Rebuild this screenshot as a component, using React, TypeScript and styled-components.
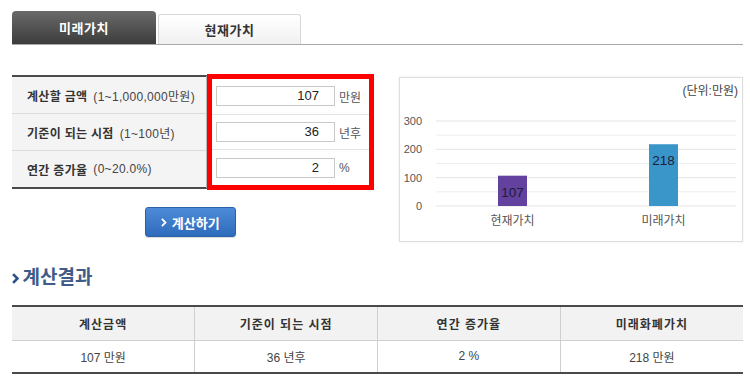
import React from "react";
import styled, { createGlobalStyle } from "styled-components";

const Global = createGlobalStyle`
  html, body { margin: 0; padding: 0; background: #fff; }
  body { font-family: "Liberation Sans", "Noto Sans CJK KR", sans-serif; color: #333; }
  * { box-sizing: border-box; }
`;

const Page = styled.div`
  width: 750px;
  padding: 11px 7px 0 12px;
`;

const TabBar = styled.div`
  display: flex;
  align-items: flex-end;
  gap: 2px;
  height: 34px;
  border-bottom: 1px solid #a8a8a8;
`;

const Tab = styled.div<{ $active?: boolean }>`
  display: flex;
  align-items: center;
  justify-content: center;
  font-size: 13px;
  font-weight: bold;
  letter-spacing: 0.5px;
  ${(p) =>
    p.$active
      ? `width: 144px; height: 33px; color: #fff; background: linear-gradient(#6a6a6a, #3c3c3c); border-radius: 4px 4px 0 0;`
      : `width: 143px; height: 30px; color: #333; background: linear-gradient(#ffffff, #f1f1f1); border: 1px solid #d8d8d8; border-bottom: none; border-radius: 3px 3px 0 0;`}
`;

const Main = styled.div`
  display: flex;
  align-items: flex-start;
  margin-top: 29px;
`;

const LeftCol = styled.div`
  display: flex;
  flex-direction: column;
  align-items: center;
  width: 362px;
`;

const Form = styled.div`
  display: flex;
  align-items: center;
  width: 100%;
`;

const LabelCol = styled.div`
  width: 195px;
  border-top: 2px solid #4a4a4a;
  border-bottom: 2px solid #4a4a4a;
  border-right: 1px solid #b8b8b8;
`;

const LabelRow = styled.div<{ $last?: boolean }>`
  height: ${(p) => (p.$last ? 36 : 37)}px;
  display: flex;
  align-items: center;
  padding-left: 15px;
  background: #f4f4f4;
  font-size: 12px;
  letter-spacing: 0.3px;
  white-space: nowrap;
  border-bottom: ${(p) => (p.$last ? "none" : "1px solid #dcdcdc")};
  b { font-weight: bold; margin-right: 6px; color: #333; }
  span { color: #444; }
`;

const RedBox = styled.div`
  width: 167px;
  height: 116px;
  border: 5px solid #ff0000;
  display: flex;
  flex-direction: column;
`;

const ValueRow = styled.div<{ $last?: boolean }>`
  flex: 1;
  display: flex;
  align-items: center;
  padding-left: 4px;
  border-bottom: ${(p) => (p.$last ? "none" : "1px solid #e4e4e4")};
`;

const Input = styled.div`
  width: 119px;
  height: 20px;
  border: 1px solid #c9c9c9;
  background: #fff;
  text-align: right;
  padding-right: 15px;
  font-size: 13px;
  line-height: 18px;
  color: #222;
`;

const Unit = styled.span`
  margin-left: 4px;
  font-size: 12px;
  color: #555;
`;

const CalcButton = styled.button`
  margin: 17px 5px 0 0;
  width: 91px;
  height: 30px;
  border: 1px solid #2c60a8;
  border-radius: 3px;
  background: linear-gradient(#4d8bd8, #2f6bbb);
  color: #fff;
  font-family: inherit;
  font-size: 13px;
  font-weight: bold;
  display: flex;
  align-items: center;
  justify-content: center;
  gap: 5px;
  padding: 0;
  box-shadow: 0 1px 1px rgba(0,0,0,0.15);
`;

const ChartBox = styled.div`
  margin-left: 25px;
  margin-top: 3px;
  width: 344px;
  height: 165px;
  border: 1px solid #dedede;
  box-shadow: 0 0 2px rgba(0,0,0,0.08);
  background: #fff;
  svg { display: block; }
`;

const Heading = styled.h2`
  margin: 24px 0 0 0;
  display: flex;
  align-items: center;
  gap: 4px;
  font-size: 19px;
  line-height: 24px;
  font-weight: bold;
  color: #3f5c88;
`;

const ResultTable = styled.table`
  margin-top: 15px;
  width: 731px;
  table-layout: fixed;
  border-collapse: collapse;
  border-top: 2px solid #4a4a4a;
  border-bottom: 2px solid #4a4a4a;
  font-size: 12px;
`;

const Th = styled.th`
  height: 34px;
  background: #f2f2f2;
  font-weight: bold;
  color: #333;
  border-bottom: 1px solid #cfcfcf;
  border-left: 1px solid #cfcfcf;
  &:first-child { border-left: none; }
  letter-spacing: 1px;
`;

const Td = styled.td`
  height: 33px;
  text-align: center;
  color: #444;
  border-left: 1px solid #cfcfcf;
  &:first-child { border-left: none; }
`;

const rows = [
  { label: "계산할 금액", range: "(1~1,000,000만원)", value: "107", unit: "만원" },
  { label: "기준이 되는 시점", range: "(1~100년)", value: "36", unit: "년후" },
  { label: "연간 증가율", range: "(0~20.0%)", value: "2", unit: "%" },
];

const Chart: React.FC = () => {
  const base = 128;
  const scale = 85 / 300;
  const grid = [0, 50, 100, 150, 200, 250, 300];
  const bars = [
    { label: "현재가치", value: 107, x: 98, color: "#62419f" },
    { label: "미래가치", value: 218, x: 249, color: "#3a95c9" },
  ];
  return (
    <svg width="342" height="163" viewBox="0 0 342 163" fontFamily='"Liberation Sans", "Noto Sans CJK KR", sans-serif'>
      <text x="338" y="17" textAnchor="end" fontSize="12" fill="#444">(단위:만원)</text>
      {grid.map((g) => (
        <line key={g} x1="36" x2="336" y1={base - g * scale} y2={base - g * scale} stroke={g % 100 === 0 ? "#e4e4e4" : "#eeeeee"} strokeWidth="1" />
      ))}
      {[0, 100, 200, 300].map((g) => (
        <text key={g} x="22" y={base - g * scale + 4} textAnchor="end" fontSize="11" fill="#555">{g}</text>
      ))}
      {bars.map((b) => {
        const h = b.value * scale;
        return (
          <g key={b.label}>
            <rect x={b.x} y={base - h} width="29" height={h} fill={b.color} />
            <text x={b.x + 14.5} y={base - h + 21} textAnchor="middle" fontSize="13.5" fill="#1d1d3a">{b.value}</text>
            <text x={b.x + 14.5} y="147" textAnchor="middle" fontSize="12" fill="#555">{b.label}</text>
          </g>
        );
      })}
    </svg>
  );
};

const Chevron: React.FC<{ size: number; color: string; w?: number }> = ({ size, color, w = 2.4 }) => (
  <svg width={size * 0.6} height={size} viewBox="0 0 6 10">
    <path d="M1 1 L5 5 L1 9" fill="none" stroke={color} strokeWidth={w} />
  </svg>
);

export default function App() {
  return (
    <Page>
      <Global />
      <TabBar>
        <Tab $active>미래가치</Tab>
        <Tab>현재가치</Tab>
      </TabBar>
      <Main>
        <LeftCol>
          <Form>
            <LabelCol>
              {rows.map((r, i) => (
                <LabelRow key={r.label} $last={i === rows.length - 1}>
                  <b>{r.label}</b>
                  <span>{r.range}</span>
                </LabelRow>
              ))}
            </LabelCol>
            <RedBox>
              {rows.map((r, i) => (
                <ValueRow key={r.label} $last={i === rows.length - 1}>
                  <Input>{r.value}</Input>
                  <Unit>{r.unit}</Unit>
                </ValueRow>
              ))}
            </RedBox>
          </Form>
          <CalcButton>
            <Chevron size={9} color="#fff" w={2} />
            계산하기
          </CalcButton>
        </LeftCol>
        <ChartBox>
          <Chart />
        </ChartBox>
      </Main>
      <Heading>
        <Chevron size={11} color="#2b4f86" w={2.4} />
        계산결과
      </Heading>
      <ResultTable>
        <thead>
          <tr>
            <Th>계산금액</Th>
            <Th>기준이 되는 시점</Th>
            <Th>연간 증가율</Th>
            <Th>미래화폐가치</Th>
          </tr>
        </thead>
        <tbody>
          <tr>
            <Td>107 만원</Td>
            <Td>36 년후</Td>
            <Td>2 %</Td>
            <Td>218 만원</Td>
          </tr>
        </tbody>
      </ResultTable>
    </Page>
  );
}
